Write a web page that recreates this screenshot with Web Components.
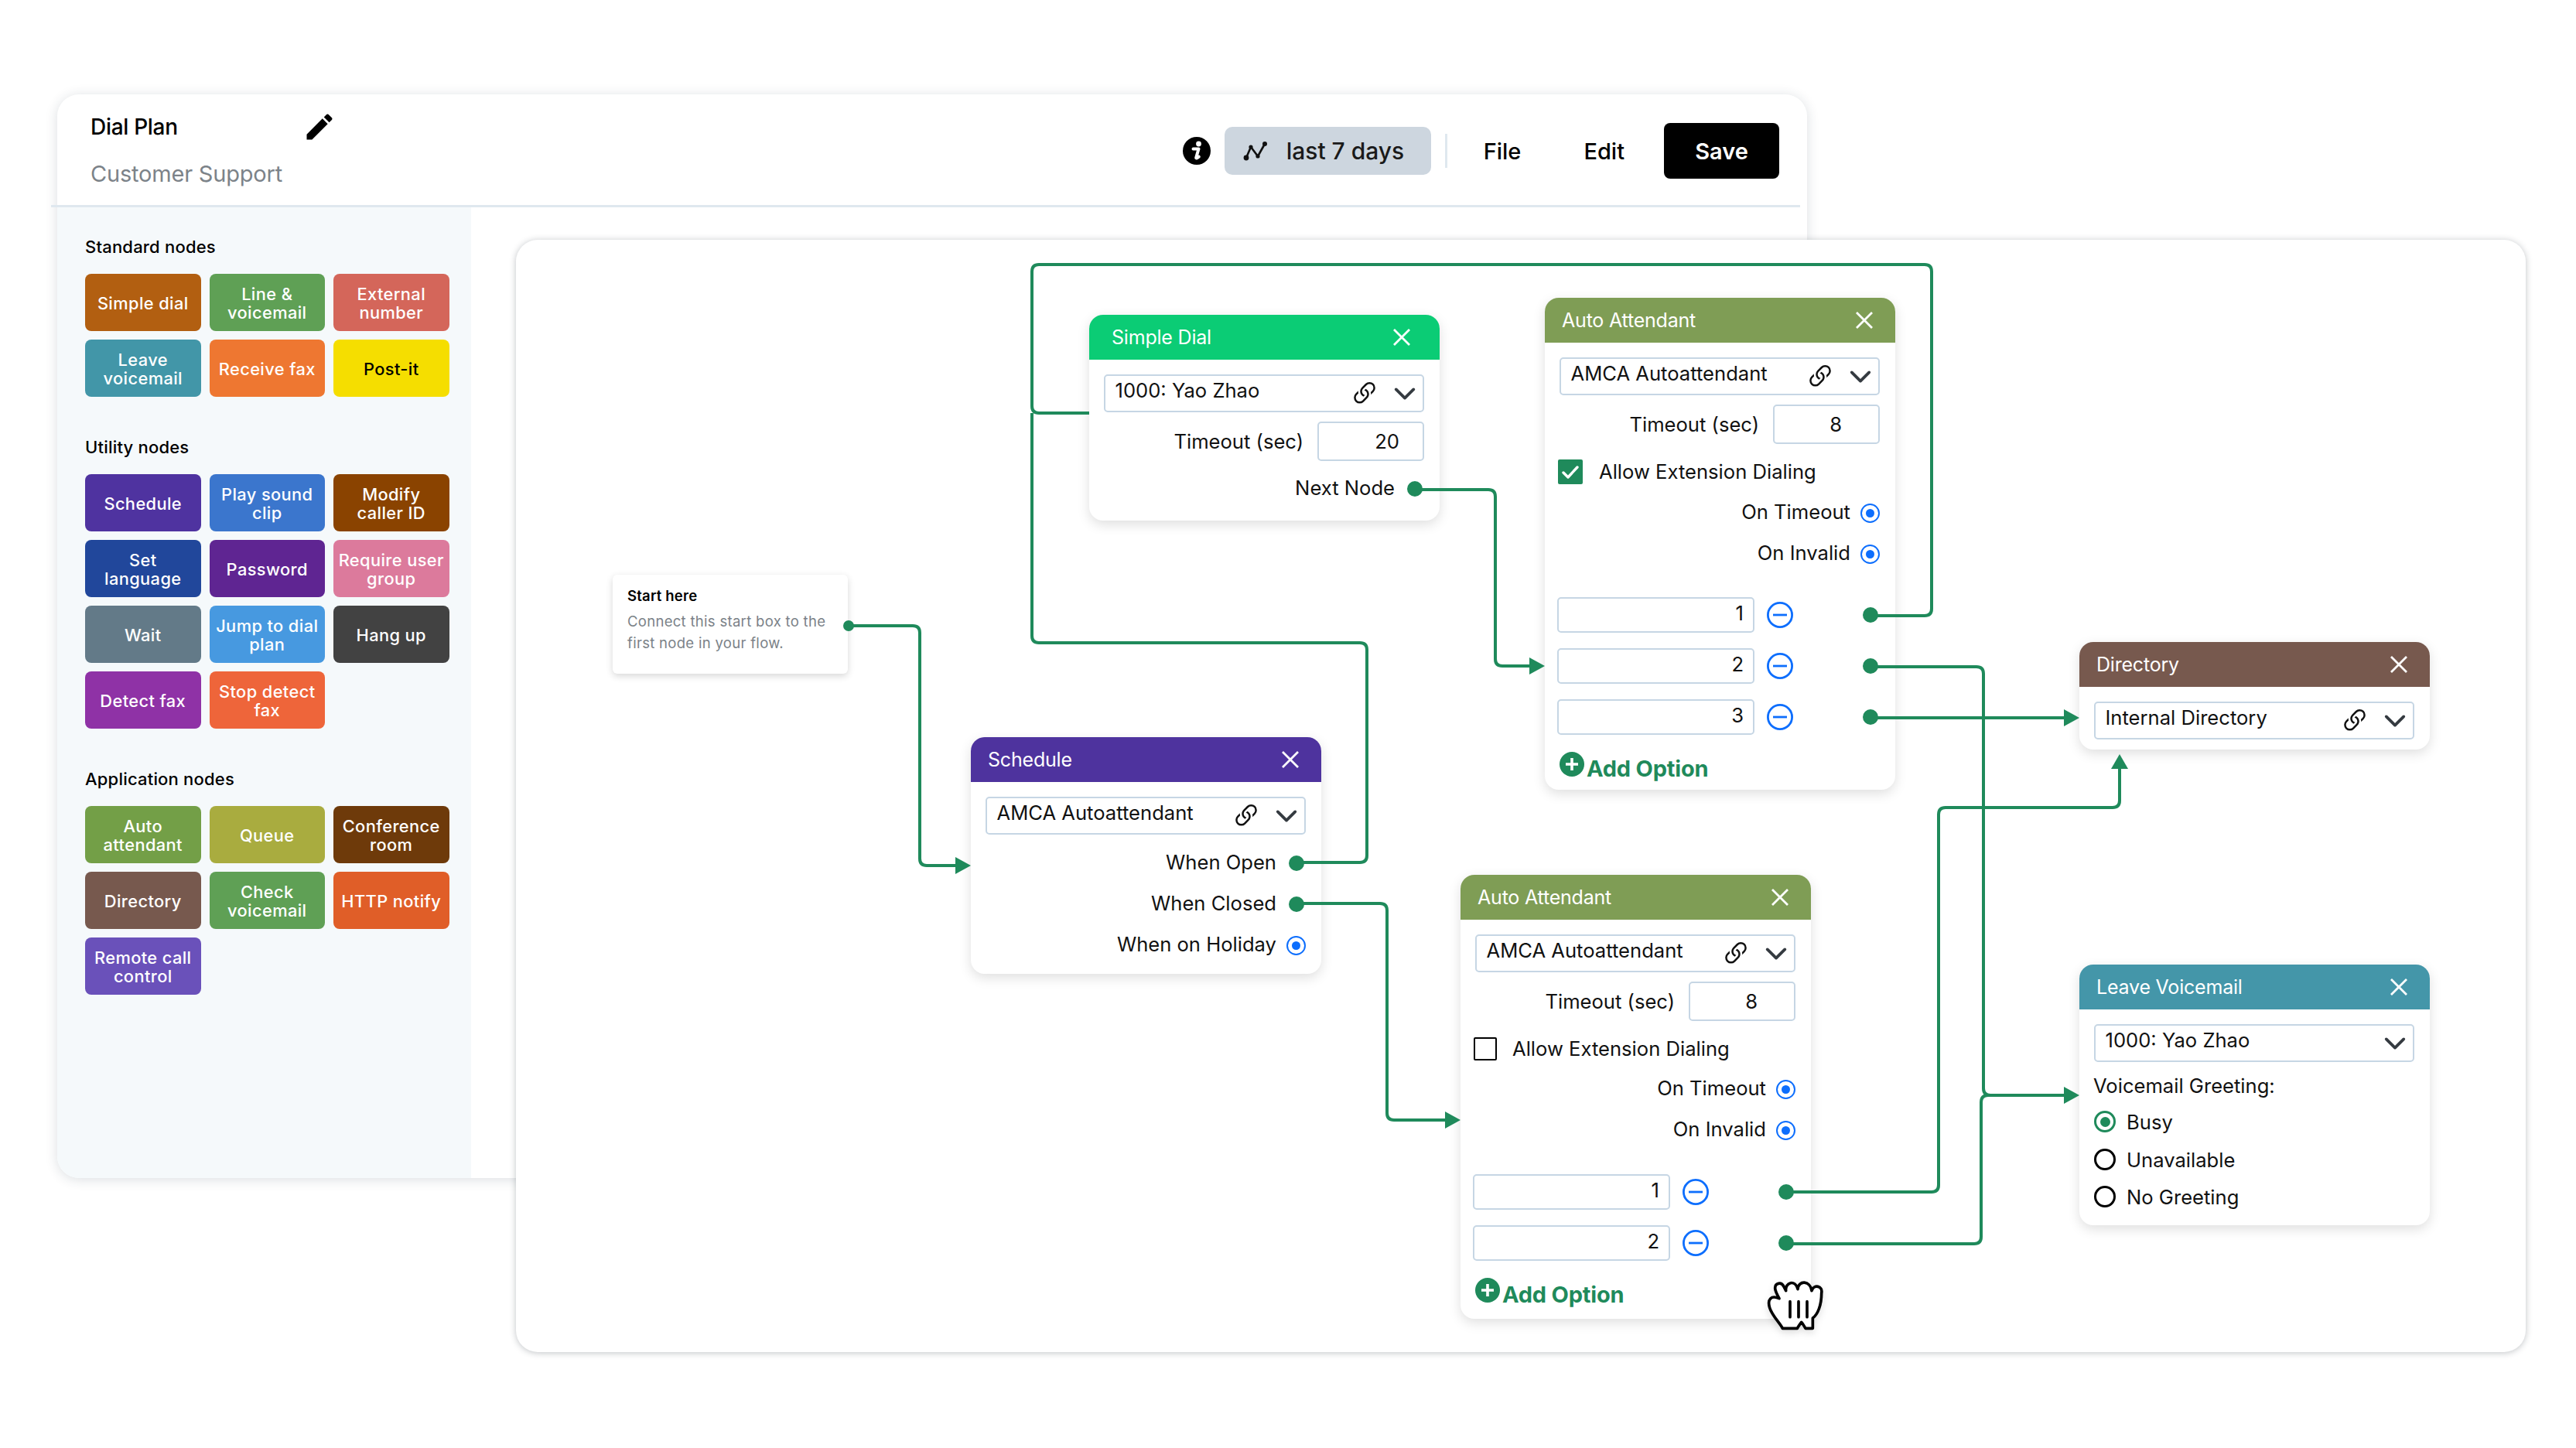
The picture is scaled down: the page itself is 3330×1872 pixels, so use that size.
<!DOCTYPE html>
<html>
<head>
<meta charset="utf-8">
<title>Dial Plan</title>
<style>
  html, body { margin: 0; background: #fff; }
  body { font-family: Inter, "Noto Sans", sans-serif; color: #111; }
  #stage { position: relative; width: 3330px; height: 1872px; overflow: hidden; }
</style>
</head>
<body>
<div id="stage">
  <dial-window>
    <dial-header slot="header" title="Dial Plan" subtitle="Customer Support"></dial-header>
    <palette-group label="Standard nodes">
      <palette-item color="#b25f11">Simple dial</palette-item>
      <palette-item color="#5fa055">Line &amp;<br>voicemail</palette-item>
      <palette-item color="#d4665a">External<br>number</palette-item>
      <palette-item color="#4296a8">Leave<br>voicemail</palette-item>
      <palette-item color="#ee7731">Receive fax</palette-item>
      <palette-item color="#f5de00" ink="#000">Post-it</palette-item>
    </palette-group>
    <palette-group label="Utility nodes">
      <palette-item color="#4f33a0">Schedule</palette-item>
      <palette-item color="#3b76cd">Play sound<br>clip</palette-item>
      <palette-item color="#8a4300">Modify<br>caller ID</palette-item>
      <palette-item color="#21479b">Set<br>language</palette-item>
      <palette-item color="#5f2592">Password</palette-item>
      <palette-item color="#dc7a9c">Require user<br>group</palette-item>
      <palette-item color="#637a88">Wait</palette-item>
      <palette-item color="#4799e0">Jump to dial<br>plan</palette-item>
      <palette-item color="#424242">Hang up</palette-item>
      <palette-item color="#8f32a6">Detect fax</palette-item>
      <palette-item color="#ee653a">Stop detect<br>fax</palette-item>
    </palette-group>
    <palette-group label="Application nodes">
      <palette-item color="#739f47">Auto<br>attendant</palette-item>
      <palette-item color="#a9ac3f">Queue</palette-item>
      <palette-item color="#6e3a0a">Conference<br>room</palette-item>
      <palette-item color="#77594e">Directory</palette-item>
      <palette-item color="#5fa055">Check<br>voicemail</palette-item>
      <palette-item color="#e05e28">HTTP notify</palette-item>
      <palette-item color="#6a51ba">Remote call<br>control</palette-item>
    </palette-group>
  </dial-window>

  <flow-canvas>
    <flow-start x="792" y="743"></flow-start>

    <flow-node label="Simple Dial" color="#0bcc75" x="1408" y="407" h="266" pad="29" close="37">
      <node-select value="1000: Yao Zhao" link></node-select>
      <node-timeout value="20" inset="30" style="margin-top:12px"></node-timeout>
      <node-port label="Next Node" kind="dot" style="margin-top:23px"></node-port>
    </flow-node>

    <flow-node label="Auto Attendant" color="#7f9d55" x="1997" y="385" h="636">
      <node-select value="AMCA Autoattendant" link></node-select>
      <node-timeout value="8" inset="47" style="margin-top:12px"></node-timeout>
      <node-check label="Allow Extension Dialing" checked style="margin-top:19px"></node-check>
      <node-port label="On Timeout" kind="radio" style="margin-top:24px"></node-port>
      <node-port label="On Invalid" kind="radio" style="margin-top:27px"></node-port>
      <node-option value="1" style="margin-top:43px"></node-option>
      <node-option value="2" style="margin-top:20px"></node-option>
      <node-option value="3" style="margin-top:20px"></node-option>
      <node-add style="margin-top:22px"></node-add>
    </flow-node>

    <flow-node label="Schedule" color="#4e339e" x="1255" y="953" h="306">
      <node-select value="AMCA Autoattendant" link></node-select>
      <node-port label="When Open" kind="dot" style="margin-top:24px"></node-port>
      <node-port label="When Closed" kind="dot" style="margin-top:27px"></node-port>
      <node-port label="When on Holiday" kind="radio" style="margin-top:27px"></node-port>
    </flow-node>

    <flow-node label="Auto Attendant" color="#7f9d55" x="1888" y="1131" h="574">
      <node-select value="AMCA Autoattendant" link></node-select>
      <node-timeout value="8" inset="47" style="margin-top:12px"></node-timeout>
      <node-check label="Allow Extension Dialing" style="margin-top:19px"></node-check>
      <node-port label="On Timeout" kind="radio" style="margin-top:23px"></node-port>
      <node-port label="On Invalid" kind="radio" style="margin-top:27px"></node-port>
      <node-option value="1" style="margin-top:44px"></node-option>
      <node-option value="2" style="margin-top:20px"></node-option>
      <node-add style="margin-top:22px"></node-add>
    </flow-node>

    <flow-node label="Directory" color="#77594e" x="2688" y="830" h="139">
      <node-select value="Internal Directory" link></node-select>
    </flow-node>

    <flow-node label="Leave Voicemail" color="#4496a9" x="2688" y="1247" h="337">
      <node-select value="1000: Yao Zhao"></node-select>
      <node-text style="margin-top:16px">Voicemail Greeting:</node-text>
      <node-radio label="Busy" checked style="margin-top:16px"></node-radio>
      <node-radio label="Unavailable" style="margin-top:19px"></node-radio>
      <node-radio label="No Greeting" style="margin-top:18px"></node-radio>
    </flow-node>

    <flow-link points="1097,809 1189,809 1189,1119 1236,1119" arrow="right"></flow-link>
    <flow-link points="2418,796 2497,796 2497,342 1334,342 1334,534 1408,534"></flow-link>
    <flow-link points="1676,1115 1767,1115 1767,831 1334,831 1334,534"></flow-link>
    <flow-link points="1830,633 1933,633 1933,861 1978,861" arrow="right"></flow-link>
    <flow-link points="2418,862 2564,862 2564,1416 2669,1416" arrow="right"></flow-link>
    <flow-link points="2418,928 2669,928" arrow="right"></flow-link>
    <flow-link points="1676,1168 1793,1168 1793,1448 1869,1448" arrow="right"></flow-link>
    <flow-link points="2309,1541 2506,1541 2506,1044 2740,1044 2740,990" arrow="up"></flow-link>
    <flow-link points="2309,1608 2561,1608 2561,1416 2669,1416"></flow-link>

    <grab-cursor x="2280" y="1650"></grab-cursor>
  </flow-canvas>
</div>

<script>
const CANVAS_X = 667;
const CANVAS_Y = 310;

const LINK_ICON = `<svg width="40" height="40" viewBox="0 0 16 16" fill="#111"><path d="M4.715 6.542 3.343 7.914a3 3 0 1 0 4.243 4.243l1.828-1.829A3 3 0 0 0 8.586 5.5L8 6.086a1.002 1.002 0 0 0-.154.199 2 2 0 0 1 .861 3.337L6.88 11.45a2 2 0 1 1-2.83-2.83l.793-.792a4.018 4.018 0 0 1-.128-1.287z"/><path d="M6.586 4.672A3 3 0 0 0 7.414 9.5l.775-.776a2 2 0 0 1-.896-3.346L9.12 3.55a2 2 0 1 1 2.83 2.83l-.793.792c.112.42.155.855.128 1.287l1.372-1.372a3 3 0 1 0-4.243-4.243L6.586 4.672z"/></svg>`;
const CHEVRON_ICON = `<svg width="30" height="30" viewBox="0 0 16 16" fill="none" stroke="#343a40" stroke-width="2" stroke-linecap="round" stroke-linejoin="round"><path d="m2 5 6 6 6-6"/></svg>`;

function mount(el, html) {
  if (el.shadowRoot) return el.shadowRoot;
  const root = el.attachShadow({ mode: "open" });
  root.innerHTML = html;
  return root;
}

class DialWindow extends HTMLElement {
  constructor() {
    super();
    mount(this, `
      <style>
        :host {
          position: absolute; left: 74px; top: 122px;
          width: 2262px; height: 1401px;
          display: flex; flex-direction: column;
          background: #fff; border-radius: 28px;
          box-shadow: 0 2px 16px rgba(30, 50, 70, .16);
        }
        .side {
          flex: 1; width: 499px; padding: 36px 0 0 36px;
          background: #f5f9fb; border-bottom-left-radius: 28px;
          display: flex; flex-direction: column; gap: 50px;
        }
      </style>
      <slot name="header"></slot>
      <div class="side"><slot></slot></div>
    `);
  }
}

class DialHeader extends HTMLElement {
  connectedCallback() {
    const root = mount(this, `
      <style>
        :host { display: block; }
        .bar { display: flex; justify-content: space-between; height: 143px; padding: 0 36px 0 43px; }
        .names { width: 312px; padding-top: 25px; }
        .top { display: flex; justify-content: space-between; align-items: center; height: 34px; }
        .title { font-size: 28px; font-weight: 500; color: #000; letter-spacing: -.3px; }
        .sub { margin-top: 26px; font-size: 29px; line-height: 36px; color: #7c8389; letter-spacing: -.2px; }
        .tools { display: flex; align-items: center; height: 146px; font-size: 29px; font-weight: 500; color: #000; }
        .info { width: 36px; height: 36px; display: block; margin-right: 18px; }
        .pill { display: flex; align-items: center; width: 267px; height: 62px; box-sizing: border-box; padding-left: 23px;
          background: #cdd6df; border-radius: 10px; margin-right: 18px; color: #1a1a1a; font-size: 30px; }
        .pill svg { margin-right: 23px; }
        .sep { width: 3px; height: 44px; background: #dfe8ef; margin-right: 47px; }
        .file { margin-right: 81px; }
        .edit { margin-right: 51px; }
        .save { width: 149px; height: 72px; background: #000; color: #fff; border-radius: 8px;
          display: flex; align-items: center; justify-content: center; font-weight: 600; font-size: 29px; }
        .rule { height: 3px; margin: 0 9px 0 -8px; background: #dfe8ef; }
      </style>
      <div class="bar">
        <div class="names">
          <div class="top">
            <span class="title"></span>
            <svg width="44" height="44" viewBox="0 0 24 24" style="margin-right:-6px"><path d="M3 17.25V21h3.75L17.81 9.94l-3.75-3.75L3 17.25zM20.71 7.04c.39-.39.39-1.02 0-1.41l-2.34-2.34c-.39-.39-1.02-.39-1.41 0l-1.83 1.83 3.75 3.75 1.83-1.83z"/></svg>
          </div>
          <div class="sub"></div>
        </div>
        <div class="tools">
          <svg class="info" viewBox="0 0 36 36"><circle cx="18" cy="18" r="18" fill="#000"/><circle cx="20.5" cy="9" r="3.4" fill="#fff"/><path d="M13.5 15.5h7l-3.2 11c-.3 1 .7 1.2 1.4.7l2.1-1.5" fill="none" stroke="#fff" stroke-width="4" stroke-linecap="round" stroke-linejoin="round"/></svg>
          <div class="pill">
            <svg width="34" height="26" viewBox="0 0 34 26" fill="none" stroke="#111" stroke-width="2.6" stroke-linejoin="round"><path d="M5 22 11 8l9 12L29 4"/><circle cx="5" cy="22" r="3.4" fill="#111" stroke="none"/><circle cx="11" cy="8" r="2.6" fill="#111" stroke="none"/><circle cx="20" cy="20" r="2.6" fill="#111" stroke="none"/><circle cx="29" cy="4" r="3" fill="#111" stroke="none"/></svg>
            <span>last 7 days</span>
          </div>
          <div class="sep"></div>
          <span class="file">File</span>
          <span class="edit">Edit</span>
          <div class="save">Save</div>
        </div>
      </div>
      <div class="rule"></div>
    `);
    root.querySelector(".title").textContent = this.getAttribute("title");
    root.querySelector(".sub").textContent = this.getAttribute("subtitle");
    this.removeAttribute("title");
  }
}

class PaletteGroup extends HTMLElement {
  connectedCallback() {
    const root = mount(this, `
      <style>
        :host { display: block; }
        .label { font-size: 22px; line-height: 30px; font-weight: 500; color: #000; margin-bottom: 20px; letter-spacing: .2px; }
        .grid { display: grid; grid-template-columns: repeat(3, 149.5px); grid-auto-rows: 74px; gap: 11px; }
      </style>
      <div class="label"></div>
      <div class="grid"><slot></slot></div>
    `);
    root.querySelector(".label").textContent = this.getAttribute("label");
  }
}

class PaletteItem extends HTMLElement {
  connectedCallback() {
    mount(this, `
      <style>
        :host {
          display: flex; align-items: center; justify-content: center; text-align: center;
          box-sizing: border-box; padding: 3px 0 0; border-radius: 8px;
          background: var(--c); color: var(--ink, #fff);
          font-size: 21.8px; line-height: 23.6px; font-weight: 500; letter-spacing: .4px;
        }
        span { display: block; }
      </style>
      <span><slot></slot></span>
    `);
    this.style.setProperty("--c", this.getAttribute("color"));
    if (this.hasAttribute("ink")) this.style.setProperty("--ink", this.getAttribute("ink"));
  }
}

class FlowCanvas extends HTMLElement {
  constructor() {
    super();
    mount(this, `
      <style>
        :host {
          position: absolute; left: ${CANVAS_X}px; top: ${CANVAS_Y}px;
          width: 2598px; height: 1438px;
          background: #fff; border-radius: 28px;
          box-shadow: 0 1px 8px rgba(30, 40, 50, .28);
        }
      </style>
      <slot></slot>
    `);
  }
}

class FlowStart extends HTMLElement {
  connectedCallback() {
    mount(this, `
      <style>
        :host {
          position: absolute; width: 304px; height: 128px; box-sizing: border-box; padding: 14px 19px;
          background: #fff; border-radius: 6px; box-shadow: 0 3px 10px rgba(0, 0, 0, .16);
        }
        .t { font-size: 18.5px; line-height: 26px; font-weight: 600; color: #000; letter-spacing: .2px; }
        .d { font-size: 18.5px; line-height: 28.3px; margin-top: 6px; color: #7b8288; letter-spacing: .3px; white-space: nowrap; }
        .dot { position: absolute; right: -8px; top: 59px; width: 14px; height: 14px; border-radius: 50%; background: #1f8a5b; }
      </style>
      <div class="t">Start here</div>
      <div class="d">Connect this start box to the<br>first node in your flow.</div>
      <div class="dot"></div>
    `);
    this.style.left = this.getAttribute("x") - CANVAS_X + "px";
    this.style.top = this.getAttribute("y") - CANVAS_Y + "px";
  }
}

class FlowNode extends HTMLElement {
  connectedCallback() {
    const root = mount(this, `
      <style>
        :host {
          position: absolute; width: 453px; box-sizing: border-box;
          background: #fff; border-radius: 18px;
          box-shadow: 0 5px 16px rgba(0, 0, 0, .13);
          display: flex; flex-direction: column;
          font-size: 25.6px; color: #111;
        }
        .head {
          flex: none; height: 58px; display: flex; align-items: center; justify-content: space-between;
          border-radius: 18px 18px 0 0; color: #fff; font-size: 25px; letter-spacing: -.2px;
          box-sizing: border-box;
        }
        .body { display: flex; flex-direction: column; padding: 19px 20px 0 19px; }
      </style>
      <div class="head">
        <span class="name"></span>
        <svg width="24" height="24" viewBox="0 0 24 24" stroke="#fff" stroke-width="2.8"><path d="M2 2 22 22M22 2 2 22"/></svg>
      </div>
      <div class="body"><slot></slot></div>
    `);
    const head = root.querySelector(".head");
    head.style.background = this.getAttribute("color");
    head.style.paddingLeft = (this.getAttribute("pad") || 22) + "px";
    head.style.paddingRight = (this.getAttribute("close") || 28) + "px";
    root.querySelector(".name").textContent = this.getAttribute("label");
    this.style.left = this.getAttribute("x") - CANVAS_X + "px";
    this.style.top = this.getAttribute("y") - CANVAS_Y + "px";
    this.style.height = this.getAttribute("h") + "px";
  }
}

class NodeSelect extends HTMLElement {
  connectedCallback() {
    const root = mount(this, `
      <style>
        :host {
          display: flex; align-items: center; height: 49px; box-sizing: border-box;
          padding: 0 8px 0 12.5px; border: 2.5px solid #c6d6e4; border-radius: 5px;
        }
        .v { flex: 1; padding-bottom: 9px; white-space: nowrap; }
        .l { display: flex; margin-right: 17px; }
      </style>
      <span class="v"></span>
      ${this.hasAttribute("link") ? `<span class="l">${LINK_ICON}</span>` : ""}
      ${CHEVRON_ICON}
    `);
    root.querySelector(".v").textContent = this.getAttribute("value");
  }
}

class NodeTimeout extends HTMLElement {
  connectedCallback() {
    const root = mount(this, `
      <style>
        :host { display: flex; align-items: center; justify-content: flex-end; }
        .box {
          width: 138px; height: 51px; box-sizing: border-box; margin-left: 18px;
          border: 2.5px solid #c6d6e4; border-radius: 5px;
          display: flex; align-items: center; justify-content: flex-end;
        }
      </style>
      <span>Timeout (sec)</span>
      <div class="box"><span class="n"></span></div>
    `);
    const n = root.querySelector(".n");
    n.textContent = this.getAttribute("value");
    root.querySelector(".box").style.paddingRight = this.getAttribute("inset") + "px";
  }
}

class NodeCheck extends HTMLElement {
  connectedCallback() {
    const on = this.hasAttribute("checked");
    const root = mount(this, `
      <style>
        :host { display: flex; align-items: center; height: 33px; margin-left: -2px; }
        .b { width: 32px; height: 32px; box-sizing: border-box; border-radius: 2px; margin-right: 21px; display: flex; }
        .on { background: #1f8a5b; }
        .off { width: 30px; height: 30px; border: 2.5px solid #000; margin-right: 20px; }
      </style>
      <span class="b ${on ? "on" : "off"}">${on ? `<svg viewBox="0 0 32 32" fill="none" stroke="#fff" stroke-width="3.4" stroke-linecap="round" stroke-linejoin="round"><path d="m7 17 6 6 12-13"/></svg>` : ""}</span>
      <span class="t"></span>
    `);
    root.querySelector(".t").textContent = this.getAttribute("label");
  }
}

class NodePort extends HTMLElement {
  connectedCallback() {
    const dot = this.getAttribute("kind") === "dot";
    const root = mount(this, `
      <style>
        :host { display: flex; align-items: center; justify-content: flex-end; height: 26px; }
        .t { padding-bottom: 3px; }
        .p { flex: none; width: 25px; height: 25px; margin-left: 13px; display: flex; align-items: center; justify-content: center; }
        .dot { width: 20px; height: 20px; border-radius: 50%; background: #1f8a5b; }
        .radio { box-sizing: border-box; border: 2.5px solid #0d6efd; border-radius: 50%; }
        .radio i { width: 11px; height: 11px; border-radius: 50%; background: #0d6efd; }
      </style>
      <span class="t"></span>
      <span class="p ${dot ? "" : "radio"}">${dot ? `<span class="dot"></span>` : "<i></i>"}</span>
    `);
    root.querySelector(".t").textContent = this.getAttribute("label");
  }
}

class NodeOption extends HTMLElement {
  connectedCallback() {
    const root = mount(this, `
      <style>
        :host { display: flex; align-items: center; height: 46px; margin-left: -3px; }
        .box {
          width: 255px; height: 46px; box-sizing: border-box; padding: 0 12px 5px 0; flex: none;
          border: 2.5px solid #c6d6e4; border-radius: 5px; text-align: right; line-height: 37px;
        }
        .m { flex: none; margin-left: 16px; width: 34px; height: 34px; display: block; }
        .dot { flex: none; width: 20px; height: 20px; border-radius: 50%; background: #1f8a5b; margin-left: 90px; }
      </style>
      <div class="box"></div>
      <svg class="m" viewBox="0 0 34 34" fill="none" stroke="#0d6efd" stroke-width="2.8"><circle cx="17" cy="17" r="15.6"/><path d="M8 17h18"/></svg>
      <span class="dot"></span>
    `);
    root.querySelector(".box").textContent = this.getAttribute("value");
  }
}

class NodeAdd extends HTMLElement {
  constructor() {
    super();
    mount(this, `
      <style>
        :host { display: flex; align-items: flex-start; height: 42px; color: #1f8a5b; font-size: 29px; font-weight: 700; line-height: 40px; letter-spacing: -.2px; }
        svg { flex: none; margin-right: 3px; }
        span { padding-top: 2px; }
      </style>
      <svg width="32" height="32" viewBox="0 0 32 32"><circle cx="16" cy="16" r="16" fill="#1f8a5b"/><path d="M16 8v16M8 16h16" stroke="#fff" stroke-width="3.6"/></svg>
      <span>Add Option</span>
    `);
  }
}

class NodeText extends HTMLElement {
  constructor() {
    super();
    mount(this, `<style>:host { display: block; line-height: 30px; margin-left: -1px; }</style><slot></slot>`);
  }
}

class NodeRadio extends HTMLElement {
  connectedCallback() {
    const on = this.hasAttribute("checked");
    const root = mount(this, `
      <style>
        :host { display: flex; align-items: center; height: 30px; }
        .r { flex: none; width: 28px; height: 28px; box-sizing: border-box; border-radius: 50%; margin-right: 14px;
          border: 3px solid ${on ? "#1f8a5b" : "#000"}; display: flex; align-items: center; justify-content: center; }
        .r i { width: 13px; height: 13px; border-radius: 50%; background: #1f8a5b; }
      </style>
      <span class="r">${on ? "<i></i>" : ""}</span>
      <span class="t"></span>
    `);
    root.querySelector(".t").textContent = this.getAttribute("label");
  }
}

// orthogonal connector, points are page coordinates, corners get rounded
class FlowLink extends HTMLElement {
  connectedCallback() {
    const pts = this.getAttribute("points").split(" ").map((p) => p.split(",").map(Number));
    const arrow = this.getAttribute("arrow");
    const r = 9;
    let d = `M${pts[0][0]} ${pts[0][1]}`;
    for (let i = 1; i < pts.length - 1; i++) {
      const [px, py] = pts[i - 1];
      const [x, y] = pts[i];
      const [nx, ny] = pts[i + 1];
      const ax = x - Math.sign(x - px) * r;
      const ay = y - Math.sign(y - py) * r;
      const bx = x + Math.sign(nx - x) * r;
      const by = y + Math.sign(ny - y) * r;
      d += ` L${ax} ${ay} Q${x} ${y} ${bx} ${by}`;
    }
    const end = pts[pts.length - 1];
    d += ` L${end[0]} ${end[1]}`;
    let head = "";
    if (arrow === "right") {
      head = `<path d="M${end[0] - 1} ${end[1] - 11}l20 11-20 11z" fill="#1f8a5b"/>`;
    } else if (arrow === "up") {
      head = `<path d="M${end[0] - 11} ${end[1] + 4}h22l-11-19z" fill="#1f8a5b"/>`;
    }
    mount(this, `
      <style>:host { position: absolute; left: 0; top: 0; width: 100%; height: 100%; pointer-events: none; }</style>
      <svg width="2598" height="1438" viewBox="${CANVAS_X} ${CANVAS_Y} 2598 1438" style="overflow:visible;display:block">
        <path d="${d}" fill="none" stroke="#1f8a5b" stroke-width="4"/>${head}
      </svg>
    `);
  }
}

class GrabCursor extends HTMLElement {
  connectedCallback() {
    mount(this, `
      <style>:host { position: absolute; width: 80px; height: 74px; filter: drop-shadow(0 4px 5px rgba(0,0,0,.12)); }</style>
      <svg width="80" height="74" viewBox="60 150 240 222" fill="#fff" stroke="#000" stroke-width="11" stroke-linejoin="round" stroke-linecap="round">
        <path d="M133 352C122 330 92 302 83 272 73 240 88 222 120 236 112 222 104 208 104 196 104 176 128 170 138 190L146 206C142 174 182 160 192 200 194 165 240 165 246 206 254 180 290 186 284 216 284 260 270 298 250 312V352H222C216 342 212 334 206 328 200 336 194 344 190 352Z"/>
        <path d="M162 248v60M195 248v60M228 248v60" fill="none"/>
      </svg>
    `);
    this.style.left = this.getAttribute("x") - CANVAS_X + "px";
    this.style.top = this.getAttribute("y") - CANVAS_Y + "px";
  }
}

customElements.define("dial-window", DialWindow);
customElements.define("dial-header", DialHeader);
customElements.define("palette-group", PaletteGroup);
customElements.define("palette-item", PaletteItem);
customElements.define("flow-canvas", FlowCanvas);
customElements.define("flow-start", FlowStart);
customElements.define("flow-node", FlowNode);
customElements.define("node-select", NodeSelect);
customElements.define("node-timeout", NodeTimeout);
customElements.define("node-check", NodeCheck);
customElements.define("node-port", NodePort);
customElements.define("node-option", NodeOption);
customElements.define("node-add", NodeAdd);
customElements.define("node-text", NodeText);
customElements.define("node-radio", NodeRadio);
customElements.define("flow-link", FlowLink);
customElements.define("grab-cursor", GrabCursor);
</script>
</body>
</html>
